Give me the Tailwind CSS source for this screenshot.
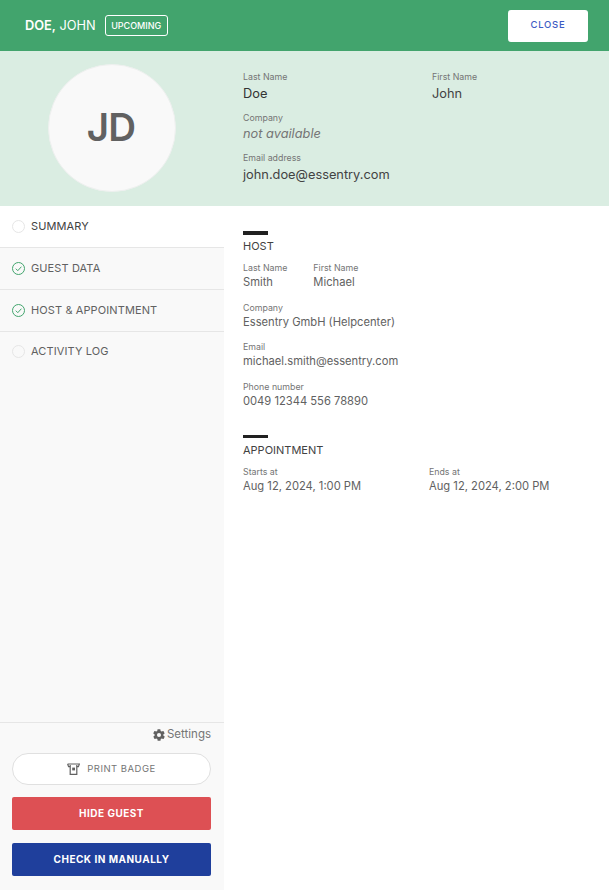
<!doctype html>
<html>
<head>
<meta charset="utf-8">
<script src="https://cdn.jsdelivr.net/npm/@tailwindcss/browser@4"></script>
</head>
<body class="font-['Inter',sans-serif] text-[#333] bg-white">
<div class="w-[609px] h-[890px] flex flex-col overflow-hidden">
  <header class="h-[51px] shrink-0 bg-[#42a46d] flex items-center justify-between pl-[25px] pr-[21px]">
    <div class="flex items-center gap-[9px]">
      <span class="text-[12.8px] text-white"><b class="font-semibold">DOE,</b> JOHN</span>
      <span class="h-[21px] w-[63px] flex items-center justify-center border border-white rounded-[3px] text-white text-[9px] font-medium">UPCOMING</span>
    </div>
    <button class="w-[80px] h-[32px] mt-[1px] pb-[2px] bg-white rounded-[3px] text-[#3d5cc4] text-[9.5px] font-medium tracking-[0.08em]">CLOSE</button>
  </header>
  <section class="h-[155px] shrink-0 bg-[#daede2] flex">
    <div class="w-[224px] shrink-0 flex items-start pt-[13px] pl-[48px]">
      <div class="w-[128px] h-[128px] rounded-full bg-[#f9f9f9] border border-[#eef0ef] flex items-center justify-center pr-[2px] text-[#616161] text-[38.5px] font-semibold tracking-[-0.02em]">JD</div>
    </div>
    <div class="pl-[19px] pt-[19px] flex-1">
      <div class="grid grid-cols-[189px_1fr]">
        <div>
          <div class="text-[8.8px] leading-[13px] text-[#757575]">Last Name</div>
          <div class="text-[12.8px] leading-[22px] text-[#333]">Doe</div>
        </div>
        <div>
          <div class="text-[8.8px] leading-[13px] text-[#757575]">First Name</div>
          <div class="text-[12.8px] leading-[22px] text-[#424242]">John</div>
        </div>
      </div>
      <div class="mt-[6px]">
        <div class="text-[8.8px] leading-[13px] text-[#757575]">Company</div>
        <div class="text-[12.8px] leading-[20px] italic text-[#757575]">not available</div>
      </div>
      <div class="mt-[7px]">
        <div class="text-[8.8px] leading-[13px] text-[#757575]">Email address</div>
        <div class="text-[12.8px] leading-[22px] text-[#424242]">john.doe@essentry.com</div>
      </div>
    </div>
  </section>
  <div class="flex-1 flex min-h-0">
    <aside class="w-[224px] shrink-0 bg-[#f9f9f9] flex flex-col">
      <nav class="flex-1 text-[11px] tracking-[0.01em] text-[#616161]">
        <div class="h-[42px] bg-white border-b border-[#e6e6e6] flex items-center pl-[12px] gap-[6px] text-[#424242]">
          <span class="w-[13px] h-[13px] rounded-full border border-[#e6e6e6]"></span><span>SUMMARY</span>
        </div>
        <div class="h-[42px] border-b border-[#e6e6e6] flex items-center pl-[12px] gap-[6px]">
          <svg class="w-[13px] h-[13px]" viewBox="0 0 13 13" fill="none" stroke="#42a46d"><circle cx="6.5" cy="6.5" r="6"/><path d="M3.8 6.7l2 2 3.6-4"/></svg><span>GUEST DATA</span>
        </div>
        <div class="h-[42px] border-b border-[#e6e6e6] flex items-center pl-[12px] gap-[6px]">
          <svg class="w-[13px] h-[13px]" viewBox="0 0 13 13" fill="none" stroke="#42a46d"><circle cx="6.5" cy="6.5" r="6"/><path d="M3.8 6.7l2 2 3.6-4"/></svg><span>HOST &amp; APPOINTMENT</span>
        </div>
        <div class="h-[38px] flex items-center pl-[12px] gap-[6px]">
          <span class="w-[13px] h-[13px] rounded-full border border-[#e6e6e6]"></span><span>ACTIVITY LOG</span>
        </div>
      </nav>
      <div class="border-t border-[#e6e6e6] h-[168px] shrink-0 pl-[12px] pr-[13px] flex flex-col">
        <div class="h-[22px] mt-[1px] flex items-center justify-end gap-[1px] text-[11.5px] text-[#757575]">
          <svg class="w-[14px] h-[14px]" viewBox="0 0 24 24" fill="#616161"><path d="M19.4 13a7.5 7.5 0 0 0 0-2l2.1-1.6a.5.5 0 0 0 .1-.6l-2-3.5a.5.5 0 0 0-.6-.2l-2.5 1a7.3 7.3 0 0 0-1.7-1l-.4-2.6a.5.5 0 0 0-.5-.4h-4a.5.5 0 0 0-.5.4l-.4 2.6a7.3 7.3 0 0 0-1.7 1l-2.5-1a.5.5 0 0 0-.6.2l-2 3.5a.5.5 0 0 0 .1.6L4.6 11a7.5 7.5 0 0 0 0 2l-2.1 1.6a.5.5 0 0 0-.1.6l2 3.5a.5.5 0 0 0 .6.2l2.5-1a7.3 7.3 0 0 0 1.7 1l.4 2.6a.5.5 0 0 0 .5.4h4a.5.5 0 0 0 .5-.4l.4-2.6a7.3 7.3 0 0 0 1.7-1l2.5 1a.5.5 0 0 0 .6-.2l2-3.5a.5.5 0 0 0-.1-.6zM12 15.5a3.5 3.5 0 1 1 0-7 3.5 3.5 0 0 1 0 7z"/></svg>
          <span>Settings</span>
        </div>
        <button class="mt-[7px] h-[32px] rounded-full bg-white border border-[#e0e0e0] flex items-center justify-center gap-[7px] text-[9.5px] tracking-[0.05em] text-[#757575]">
          <svg class="w-[13px] h-[12px]" viewBox="0 0 13 12" fill="none" stroke="#616161" stroke-width="1.2"><path d="M.6 1h11.8l-1 2.6H9.8M.6 1l1 2.6h1.6"/><path d="M3.2 2v9.4h6.6V2"/><rect x="5.2" y="4.6" width="2.8" height="2.8" fill="#616161" stroke="none"/></svg>
          <span>PRINT BADGE</span>
        </button>
        <button class="mt-[12px] h-[33px] rounded-[2px] bg-[#dd5054] text-white text-[10px] font-bold tracking-[0.05em]">HIDE GUEST</button>
        <button class="mt-[13px] h-[33px] rounded-[2px] bg-[#1f3f9c] text-white text-[10px] font-bold tracking-[0.05em]">CHECK IN MANUALLY</button>
      </div>
    </aside>
    <main class="flex-1 pl-[19px] pt-[25px]">
      <div class="w-[25px] h-[4px] bg-[#212121]"></div>
      <h2 class="mt-[3px] text-[11px] leading-[16px] text-[#424242]">HOST</h2>
      <div class="mt-[8px] flex gap-[26px]">
        <div>
          <div class="text-[8.8px] leading-[12px] text-[#757575]">Last Name</div>
          <div class="text-[11.2px] leading-[17px] text-[#616161]">Smith</div>
        </div>
        <div>
          <div class="text-[8.8px] leading-[12px] text-[#757575]">First Name</div>
          <div class="text-[11.2px] leading-[17px] text-[#616161]">Michael</div>
        </div>
      </div>
      <div class="mt-[11px]">
        <div class="text-[8.8px] leading-[12px] text-[#757575]">Company</div>
        <div class="text-[11.2px] leading-[17px] text-[#616161]">Essentry GmbH (Helpcenter)</div>
      </div>
      <div class="mt-[10px]">
        <div class="text-[8.8px] leading-[12px] text-[#757575]">Email</div>
        <div class="text-[11.2px] leading-[17px] text-[#616161]">michael.smith@essentry.com</div>
      </div>
      <div class="mt-[11px]">
        <div class="text-[8.8px] leading-[12px] text-[#757575]">Phone number</div>
        <div class="text-[11.2px] leading-[17px] text-[#616161]">0049 12344 556 78890</div>
      </div>
      <div class="mt-[25px] w-[25px] h-[3px] bg-[#212121]"></div>
      <h2 class="mt-[4px] text-[11px] leading-[16px] text-[#424242]">APPOINTMENT</h2>
      <div class="mt-[8px] grid grid-cols-[186px_1fr]">
        <div>
          <div class="text-[8.8px] leading-[12px] text-[#757575]">Starts at</div>
          <div class="text-[11.2px] leading-[17px] text-[#616161]">Aug 12, 2024, 1:00 PM</div>
        </div>
        <div>
          <div class="text-[8.8px] leading-[12px] text-[#757575]">Ends at</div>
          <div class="text-[11.2px] leading-[17px] text-[#616161]">Aug 12, 2024, 2:00 PM</div>
        </div>
      </div>
    </main>
  </div>
</div>
</body>
</html>
